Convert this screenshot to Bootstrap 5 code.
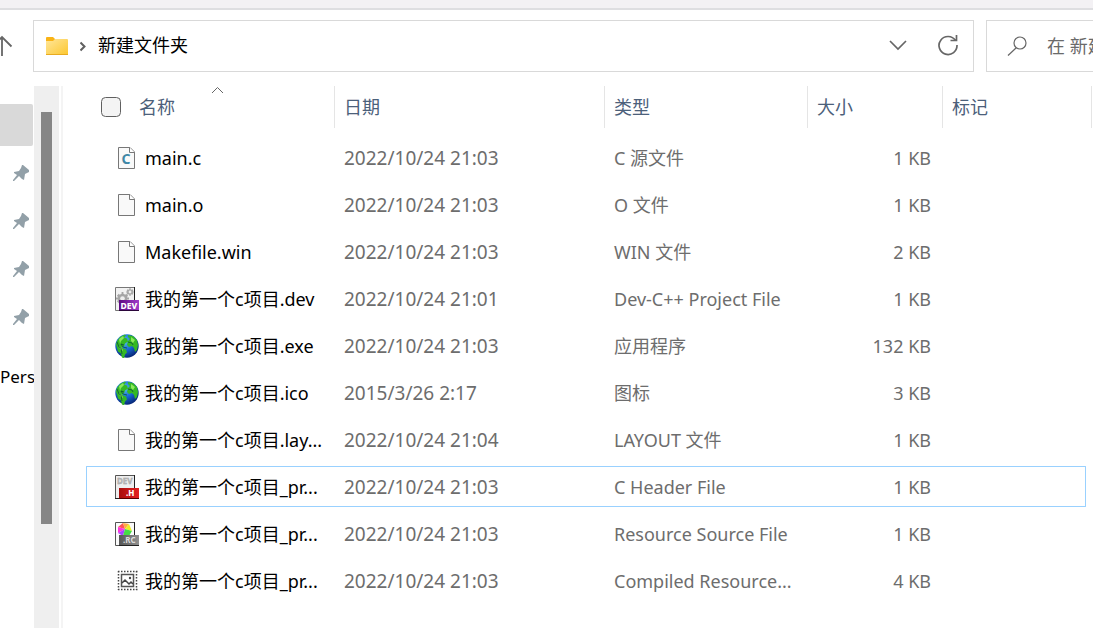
<!DOCTYPE html>
<html lang="zh-CN">
<head>
<meta charset="utf-8">
<meta name="viewport" content="width=device-width, initial-scale=1">
<title>新建文件夹</title>
<link href="https://cdn.jsdelivr.net/npm/bootstrap@5.3.0/dist/css/bootstrap.min.css" rel="stylesheet">
<style>
body { font: 18px/26px "Noto Sans", "Noto Sans CJK SC", sans-serif; color: #000; background: #fff; }
.titlebar { height: 10px; background: #f3f1f4; border-bottom: 2px solid #dedee1; }
.toolbar { margin: 10px 0 14px; height: 52px; gap: 12px; }
.up-btn { width: 33px; margin-right: -12px; }
.up-btn svg { margin-left: -11px; }
.box { border: 1px solid #d9d9d9; }
.crumb { padding: 0 0 2px 10px; }
.refresh { margin: 0 15px 0 30px; }
.search { width: 107px; border-right: 0; color: #666; }
.search input { color: #666; outline: 0; min-width: 0; }
.search input::placeholder { color: #6a6a6a; opacity: 1; }
.side { width: 34px; padding-top: 15px; }
.side a { height: 42px; margin: 3px 1px 3px 0; color: #000; }
.side a.current { background: #d9d9d9; border-radius: 0 2px 2px 0; }
.side a.drive { margin: 15px 0 3px; font-size: 17px; }
.track { width: 25px; background: #efefef; padding: 26px 7px 0; }
.thumb { height: 412px; background: #868686; }
.splitter { width: 2px; margin-left: 2px; background: #f4f4f4; }
.listing { padding: 0 1px 0 23px; min-width: 0; }
.files { table-layout: fixed; width: 100%; border-collapse: separate; border-spacing: 0; }
.files th { font-weight: 400; color: #4c607a; padding: 0 0 6px; position: relative; }
.head { height: 42px; padding-left: 9px; border-left: 1px solid #e5e5e5; }
.head.first { border-left: 0; padding-left: 15px; gap: 18px; }
.head.last { border-right: 1px solid #e5e5e5; }
.head input { width: 20px; height: 20px; margin: 0; border: 1px solid #606060; background-color: #f4f4f4; border-radius: 4px; }
.sort { position: absolute; left: 125px; top: 0; }
.files td { height: 47px; padding: 0 0 0 10px; color: #6d6d6d; white-space: nowrap; vertical-align: middle; }
.files td:first-child { padding-left: 29px; color: #000; }
.files td.date { font-size: 19px; }
.files td.size { padding-right: 11px; text-align: right; }
.focused td { position: relative; }
.focused td::after { content: ""; position: absolute; inset: 3px 0; border: solid #99d1ff; border-width: 1px 0; pointer-events: none; }
.focused td:first-child::after { border-left-width: 1px; border-radius: 1px 0 0 1px; }
.focused td:last-child::after { right: 6px; border-right-width: 1px; border-radius: 0 1px 1px 0; }
.c-name { width: 248px; } .c-date { width: 270px; } .c-type { width: 203px; } .c-size { width: 135px; }
</style>
<script src="https://cdn.jsdelivr.net/npm/bootstrap@5.3.0/dist/js/bootstrap.bundle.min.js"></script>
</head>
<body class="vh-100 d-flex flex-column overflow-hidden">
<svg width="0" height="0" class="position-absolute" aria-hidden="true">
  <defs>
    <linearGradient id="fold" x1="0" y1="0" x2="1" y2="1"><stop offset="0" stop-color="#ffe69a"/><stop offset="1" stop-color="#fcc72f"/></linearGradient>
    <radialGradient id="sea" cx=".4" cy=".3" r=".75"><stop offset="0" stop-color="#58c4f4"/><stop offset=".5" stop-color="#1767d2"/><stop offset="1" stop-color="#06206e"/></radialGradient>
    <linearGradient id="violet" x1="0" y1="0" x2="1" y2="0"><stop offset="0" stop-color="#5d0a80"/><stop offset="1" stop-color="#a23ccb"/></linearGradient>
    <linearGradient id="red" x1="0" y1="0" x2="1" y2="0"><stop offset="0" stop-color="#a70d0d"/><stop offset="1" stop-color="#e41f1f"/></linearGradient>
    <linearGradient id="steel" x1="0" y1="0" x2="1" y2="0"><stop offset="0" stop-color="#555"/><stop offset="1" stop-color="#919191"/></linearGradient>
    <symbol id="pin" viewBox="0 0 16 16"><path fill="#92a0a8" d="M9 0l1 0 6 5v2l-4 2-1 6-2-1-3-3-5 5H0v-1l4-5-3-2V7l5-1 2-3z"/></symbol>
    <symbol id="page" viewBox="0 0 24 24"><path d="M3.500 1.500H15l4.500 4.500v16.500h-16z" fill="#f9f9f9" stroke="#777"/><path d="M14.500 1.500v5h5" fill="#fff" stroke="#777"/></symbol>
    <symbol id="globe" viewBox="0 0 24 24">
      <circle cx="12" cy="12" r="11.700" fill="url(#sea)"/>
      <path d="M2 7l3-4 5-2.500 1 1-2 2 3 1 1 3-3 2-1 3-2 0 1 2 3 1 1 3-2 2-1 4-2-1-1-4-3-2-1-4-1-3zM13 1l5 1 4 4 1 5-1 5-2 2-1-4-2-2-3 1-2-2 1-4 2-2-2-2z" fill="#35b824"/>
      <path d="M4 5l4-3 1 2-3 3-1 3zM16 3l4 3-2 3-2-2zM4 12l3 2 1 3-3-2z" fill="#8be85c"/>
      <path d="M2 8l2 5 2 1 1 6M13 8l4 1 1 2M9 11l-3-1 2 3 4 1" fill="none" stroke="#0a5038" stroke-width=".8"/>
    </symbol>
    <symbol id="gear" viewBox="0 0 14 14"><path d="M6 0h2v2l2 1 1-1 2 2-1 1 0 1h2v2h-2v1l1 1-2 2-2-1-1 1v2H6v-2l-2-1-1 1-2-2 1-1V8H0V6h2V5L1 4l2-2 1 1 2-1z" fill="#a6a6a6"/><circle cx="7" cy="7" r="2.500" fill="#eee"/></symbol>
  </defs>
</svg>

<div class="titlebar flex-shrink-0"></div>

<header class="toolbar d-flex flex-shrink-0">
  <button class="up-btn btn border-0 p-0 d-flex align-items-center" type="button" aria-label="向上">
    <svg width="24" height="22" viewBox="0 0 24 22" fill="none" stroke="#666" stroke-width="1.800"><path d="M13 21V2M3.500 11.500l9.500-9.500 9.500 9.500"/></svg>
  </button>
  <nav class="box flex-grow-1 d-flex align-items-center" aria-label="路径">
    <svg class="ms-2" width="30" height="20" viewBox="0 0 30 20"><path d="M4 3V2q0-1 1-1h6l2 2v4H4z" fill="#f9b316"/><path d="M4 5h7l2-2h12q1 0 1 1v14q0 1-1 1H5q-1 0-1-1z" fill="url(#fold)"/><path d="M4 18.500h22" stroke="#e8ab20"/></svg>
    <svg class="ms-2" width="8" height="12" viewBox="0 0 8 12" fill="none" stroke="#606060" stroke-width="2"><path d="M.5 2.500l4 4-4 4"/></svg>
    <a class="crumb text-reset text-decoration-none" href="#">新建文件夹</a>
    <button class="btn border-0 p-0 ms-auto d-flex" type="button" aria-label="历史记录"><svg width="20" height="14" viewBox="0 0 20 14" fill="none" stroke="#666" stroke-width="1.700"><path d="M2 2l8 8 8-8"/></svg></button>
    <button class="refresh btn border-0 p-0 d-flex" type="button" aria-label="刷新"><svg width="20" height="22" viewBox="0 0 20 22" fill="none" stroke="#666" stroke-width="1.700"><path d="M17.500 5.500A9 9 0 1 0 19 10M18.500 0v5.500h-6"/></svg></button>
  </nav>
  <label class="search box d-flex align-items-center">
    <svg class="ms-3 me-3 flex-shrink-0" width="28" height="22" viewBox="0 0 28 22" fill="none" stroke="#666" stroke-width="1.200"><circle cx="17" cy="8" r="6"/><path d="M13 13l-8 7.500"/></svg>
    <input class="border-0 p-0 flex-grow-1 bg-transparent" type="text" placeholder="在 新建文件夹 中搜索" aria-label="搜索">
  </label>
</header>

<main class="d-flex flex-grow-1 overflow-hidden">
  <nav class="side d-flex flex-column flex-shrink-0 overflow-hidden" aria-label="快速访问">
    <a class="current" href="#" aria-label="当前位置"></a>
    <a class="d-flex align-items-center justify-content-end pe-1" href="#" aria-label="已固定"><svg width="16" height="16"><use href="#pin"/></svg></a>
    <a class="d-flex align-items-center justify-content-end pe-1" href="#" aria-label="已固定"><svg width="16" height="16"><use href="#pin"/></svg></a>
    <a class="d-flex align-items-center justify-content-end pe-1" href="#" aria-label="已固定"><svg width="16" height="16"><use href="#pin"/></svg></a>
    <a class="d-flex align-items-center justify-content-end pe-1" href="#" aria-label="已固定"><svg width="16" height="16"><use href="#pin"/></svg></a>
    <a class="drive d-flex align-items-center text-decoration-none" href="#">Pers</a>
  </nav>
  <div class="track flex-shrink-0"><div class="thumb"></div></div>
  <div class="splitter flex-shrink-0"></div>
  <section class="listing flex-grow-1">
    <table class="files">
      <colgroup><col class="c-name"><col class="c-date"><col class="c-type"><col class="c-size"><col></colgroup>
      <thead>
        <tr>
          <th><div class="head first d-flex align-items-center"><input class="form-check-input" type="checkbox" id="all"><label for="all">名称</label></div>
            <svg class="sort" width="14" height="8" viewBox="0 0 14 8" fill="none" stroke="#666"><path d="M1 7l5.500-5.500L12 7"/></svg></th>
          <th><div class="head d-flex align-items-center">日期</div></th>
          <th><div class="head d-flex align-items-center">类型</div></th>
          <th><div class="head d-flex align-items-center">大小</div></th>
          <th><div class="head last d-flex align-items-center">标记</div></th>
        </tr>
      </thead>
      <tbody>
        <tr><td><div class="d-flex align-items-center"><svg class="me-1" width="26" height="24" viewBox="0 0 26 24"><use href="#page" width="24" height="24"/><text x="6.500" y="18" font-family="Noto Sans" font-weight="700" font-size="14" fill="#3f87a6">C</text></svg>main.c</div></td><td class="date">2022/10/24 21:03</td><td>C 源文件</td><td class="size">1 KB</td><td></td></tr>
        <tr><td><div class="d-flex align-items-center"><svg class="me-1" width="26" height="24" viewBox="0 0 26 24"><use href="#page" width="24" height="24"/></svg>main.o</div></td><td class="date">2022/10/24 21:03</td><td>O 文件</td><td class="size">1 KB</td><td></td></tr>
        <tr><td><div class="d-flex align-items-center"><svg class="me-1" width="26" height="24" viewBox="0 0 26 24"><use href="#page" width="24" height="24"/></svg>Makefile.win</div></td><td class="date">2022/10/24 21:03</td><td>WIN 文件</td><td class="size">2 KB</td><td></td></tr>
        <tr><td><div class="d-flex align-items-center"><svg class="me-1" width="26" height="24" viewBox="0 0 26 24"><path d="M.5.500h19v23H.5z" fill="#f2f2f2" stroke="#777"/><path d="M19.500 0v22" stroke="#222"/><use href="#gear" x="1" y="5" width="13" height="13"/><use href="#gear" x="11" y="1" width="8" height="8"/><path d="M4 13h20v10H4z" fill="url(#violet)"/><path d="M4 23.500h20" stroke="#2b063b"/><text x="5.500" y="21.500" font-family="Noto Sans" font-weight="800" font-size="8.500" fill="#fff">DEV</text></svg>我的第一个c项目.dev</div></td><td class="date">2022/10/24 21:01</td><td>Dev-C++ Project File</td><td class="size">1 KB</td><td></td></tr>
        <tr><td><div class="d-flex align-items-center"><svg class="me-1" width="26" height="24" viewBox="0 0 26 24"><use href="#globe" width="24" height="24"/></svg>我的第一个c项目.exe</div></td><td class="date">2022/10/24 21:03</td><td>应用程序</td><td class="size">132 KB</td><td></td></tr>
        <tr><td><div class="d-flex align-items-center"><svg class="me-1" width="26" height="24" viewBox="0 0 26 24"><use href="#globe" width="24" height="24"/></svg>我的第一个c项目.ico</div></td><td class="date">2015/3/26 2:17</td><td>图标</td><td class="size">3 KB</td><td></td></tr>
        <tr><td><div class="d-flex align-items-center"><svg class="me-1" width="26" height="24" viewBox="0 0 26 24"><use href="#page" width="24" height="24"/></svg>我的第一个c项目.lay...</div></td><td class="date">2022/10/24 21:04</td><td>LAYOUT 文件</td><td class="size">1 KB</td><td></td></tr>
        <tr class="focused"><td><div class="d-flex align-items-center"><svg class="me-1" width="26" height="24" viewBox="0 0 26 24"><path d="M.5.500h19v23H.5z" fill="#eee" stroke="#555"/><path d="M19.500 0v22M0 23.500h20" stroke="#222"/><text x="2" y="9" font-family="Noto Sans" font-weight="700" font-size="8" fill="#bbb" stroke="#999" stroke-width=".3">DEV</text><path d="M4 13h20v10H4z" fill="url(#red)"/><path d="M4 23.500h20" stroke="#500"/><text x="11" y="21" font-family="Noto Sans" font-weight="800" font-size="8" fill="#fff">.H</text></svg>我的第一个c项目_pr...</div></td><td class="date">2022/10/24 21:03</td><td>C Header File</td><td class="size">1 KB</td><td></td></tr>
        <tr><td><div class="d-flex align-items-center"><svg class="me-1" width="26" height="24" viewBox="0 0 26 24"><path d="M.5.500h19v23H.5z" fill="#fafafa" stroke="#555"/><path d="M19.500 0v22" stroke="#222"/><path d="M10 7L8 1 3 5z" fill="#f55"/><path d="M10 7l-7-2v6z" fill="#f3d"/><path d="M10 7l-7 4 5 3z" fill="#a4f"/><path d="M10 7L8 1l6 1z" fill="#fa4"/><path d="M10 7l4-5 3 7z" fill="#ee2"/><path d="M10 7l7 2-3 5H8z" fill="#4d4"/><path d="M4 13h20v10H4z" fill="url(#steel)"/><path d="M4 23.500h20" stroke="#222"/><text x="8" y="21" font-family="Noto Sans" font-weight="700" font-size="8" fill="#ddd">.RC</text></svg>我的第一个c项目_pr...</div></td><td class="date">2022/10/24 21:03</td><td>Resource Source File</td><td class="size">1 KB</td><td></td></tr>
        <tr><td><div class="d-flex align-items-center"><svg class="me-1" width="26" height="24" viewBox="0 0 26 24" fill="none"><path d="M3 2.500h20M3 20.500h20M3.500 2v19M21.500 2v19" stroke="#444" stroke-width="1.500" stroke-dasharray="1.500 1.500"/><path d="M6.500 5.500h12v12h-12z" stroke="#555" stroke-width="1.500"/><path d="M7 14l3-3 4 4 2-2 2 2" stroke="#444" stroke-width="1.500"/><circle cx="15" cy="9" r="1.200" fill="#444"/></svg>我的第一个c项目_pr...</div></td><td class="date">2022/10/24 21:03</td><td>Compiled Resource...</td><td class="size">4 KB</td><td></td></tr>
      </tbody>
    </table>
  </section>
</main>
</body>
</html>
